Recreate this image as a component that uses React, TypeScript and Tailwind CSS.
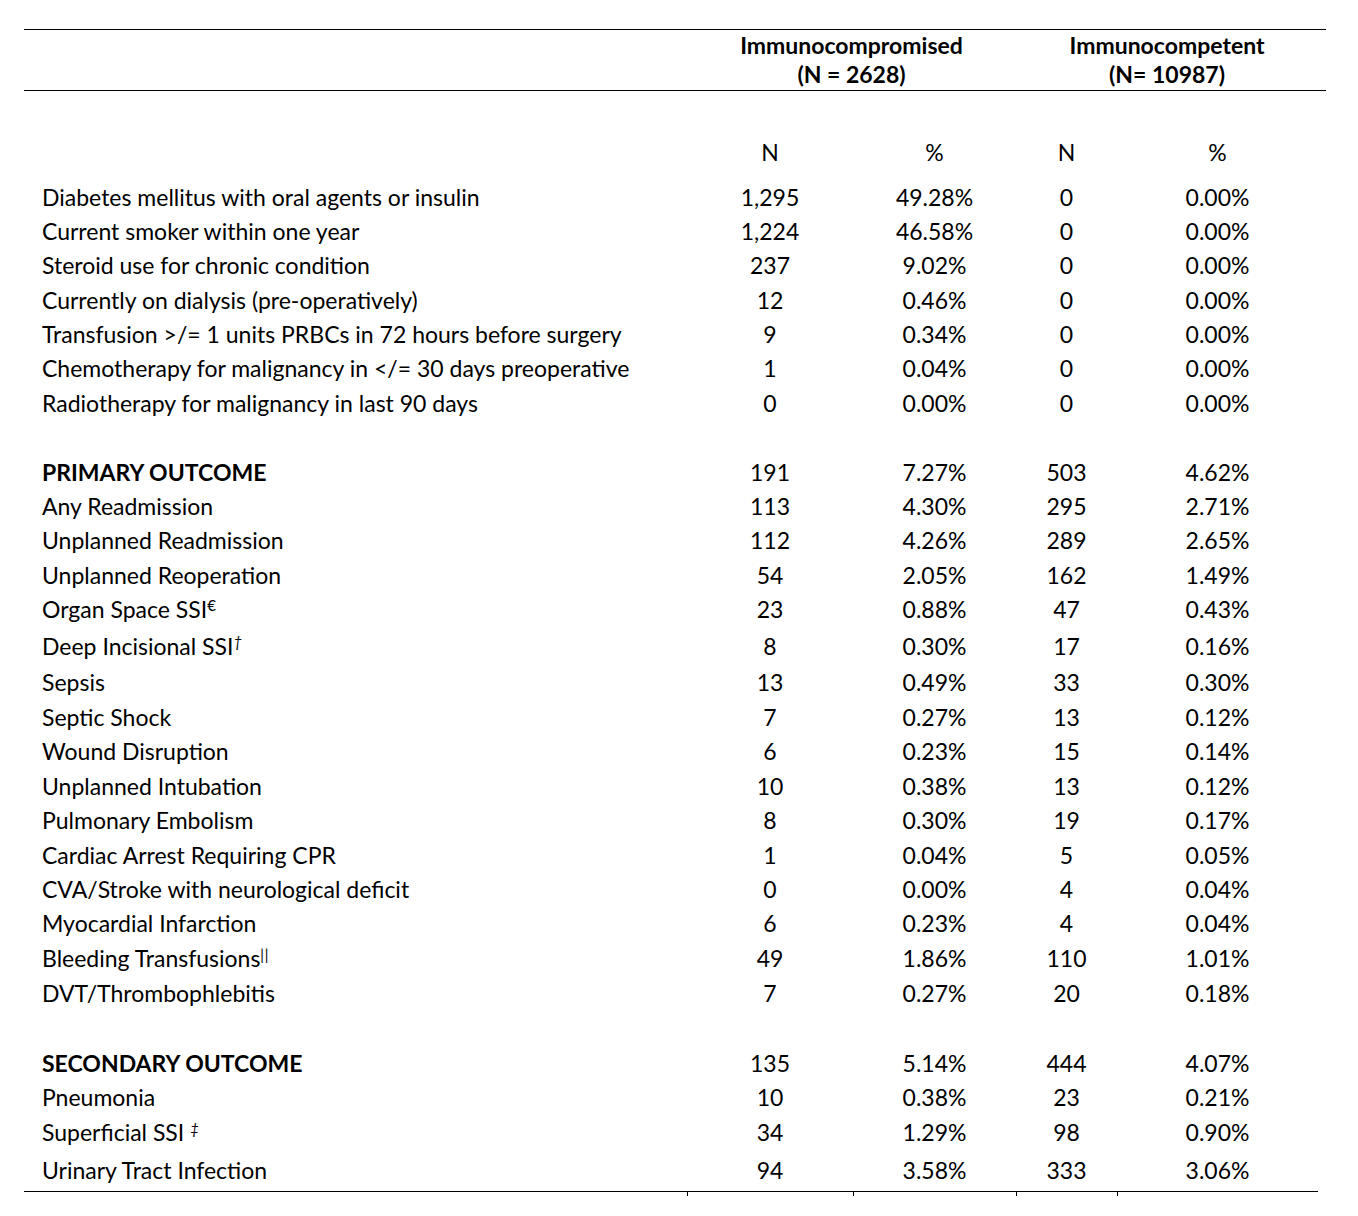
import React from 'react'

type Row = {
  label: string
  sup?: string
  supItalic?: boolean
  bold?: boolean
  h: string
  v?: [string, string, string, string]
}

const ROWS: Row[] = [
  { label: 'Diabetes mellitus with oral agents or insulin', h: 'h-[34px]', v: ['1,295', '49.28%', '0', '0.00%'] },
  { label: 'Current smoker within one year', h: 'h-[34.5px]', v: ['1,224', '46.58%', '0', '0.00%'] },
  { label: 'Steroid use for chronic condition', h: 'h-[34.5px]', v: ['237', '9.02%', '0', '0.00%'] },
  { label: 'Currently on dialysis (pre-operatively)', h: 'h-[34px]', v: ['12', '0.46%', '0', '0.00%'] },
  { label: 'Transfusion >/= 1 units PRBCs in 72 hours before surgery', h: 'h-[34.5px]', v: ['9', '0.34%', '0', '0.00%'] },
  { label: 'Chemotherapy for malignancy in </= 30 days preoperative', h: 'h-[34.5px]', v: ['1', '0.04%', '0', '0.00%'] },
  { label: 'Radiotherapy for malignancy in last 90 days', h: 'h-[34.5px]', v: ['0', '0.00%', '0', '0.00%'] },
  { label: '', h: 'h-[34.5px]' },
  { label: 'PRIMARY OUTCOME', bold: true, h: 'h-[34px]', v: ['191', '7.27%', '503', '4.62%'] },
  { label: 'Any Readmission', h: 'h-[34.5px]', v: ['113', '4.30%', '295', '2.71%'] },
  { label: 'Unplanned Readmission', h: 'h-[34.5px]', v: ['112', '4.26%', '289', '2.65%'] },
  { label: 'Unplanned Reoperation', h: 'h-[34px]', v: ['54', '2.05%', '162', '1.49%'] },
  { label: 'Organ Space SSI', sup: '€', h: 'h-[35.5px]', v: ['23', '0.88%', '47', '0.43%'] },
  { label: 'Deep Incisional SSI', sup: '†', supItalic: true, h: 'h-[37px]', v: ['8', '0.30%', '17', '0.16%'] },
  { label: 'Sepsis', h: 'h-[35.5px]', v: ['13', '0.49%', '33', '0.30%'] },
  { label: 'Septic Shock', h: 'h-[34.5px]', v: ['7', '0.27%', '13', '0.12%'] },
  { label: 'Wound Disruption', h: 'h-[34.5px]', v: ['6', '0.23%', '15', '0.14%'] },
  { label: 'Unplanned Intubation', h: 'h-[34.5px]', v: ['10', '0.38%', '13', '0.12%'] },
  { label: 'Pulmonary Embolism', h: 'h-[34.5px]', v: ['8', '0.30%', '19', '0.17%'] },
  { label: 'Cardiac Arrest Requiring CPR', h: 'h-[34px]', v: ['1', '0.04%', '5', '0.05%'] },
  { label: 'CVA/Stroke with neurological deficit', h: 'h-[34.5px]', v: ['0', '0.00%', '4', '0.04%'] },
  { label: 'Myocardial Infarction', h: 'h-[34.5px]', v: ['6', '0.23%', '4', '0.04%'] },
  { label: 'Bleeding Transfusions', sup: 'ǁ', h: 'h-[35px]', v: ['49', '1.86%', '110', '1.01%'] },
  { label: 'DVT/Thrombophlebitis', h: 'h-[35px]', v: ['7', '0.27%', '20', '0.18%'] },
  { label: '', h: 'h-[35px]' },
  { label: 'SECONDARY OUTCOME', bold: true, h: 'h-[34px]', v: ['135', '5.14%', '444', '4.07%'] },
  { label: 'Pneumonia', h: 'h-[34px]', v: ['10', '0.38%', '23', '0.21%'] },
  { label: 'Superficial SSI ', sup: '‡', supItalic: true, h: 'h-[37px]', v: ['34', '1.29%', '98', '0.90%'] },
  { label: 'Urinary Tract Infection', h: 'h-[40px]', v: ['94', '3.58%', '333', '3.06%'] },
]

export default function App() {
  return (
    <div className="min-h-[1216px] bg-white pt-[29px] pl-[24px] text-black font-['Lato','Liberation_Sans',sans-serif] text-[23px]">
      <table className="table-fixed border-collapse w-[1302px]">
        <colgroup>
          <col className="w-[663px]" />
          <col className="w-[166px]" />
          <col className="w-[163px]" />
          <col className="w-[101px]" />
          <col className="w-[201px]" />
          <col className="w-[8px]" />
        </colgroup>
        <thead>
          <tr className="border-y border-black">
            <th className="h-[61px]" />
            <th colSpan={2} className="h-[61px] pt-[1px] align-top text-center font-bold leading-[29px]">
              Immunocompromised
              <br />
              (N = 2628)
            </th>
            <th colSpan={2} className="h-[61px] pt-[1px] align-top text-center font-bold leading-[29px]">
              Immunocompetent
              <br />
              (N= 10987)
            </th>
            <th />
          </tr>
        </thead>
        <tbody>
          <tr>
            <td colSpan={6} className="h-[45px]" />
          </tr>
          <tr className="h-[45px] align-top leading-[32px] text-center">
            <td />
            <td>N</td>
            <td>%</td>
            <td>N</td>
            <td>%</td>
            <td />
          </tr>
          {ROWS.map((r, i) => (
            <tr key={i} className={`${r.h} leading-[28px]`}>
              <td className={`pl-[18px] pb-[2px] align-middle whitespace-nowrap ${r.bold ? 'font-bold' : ''}`}>
                {r.label}
                {r.sup && <sup className={`text-[15px] ${r.supItalic ? 'italic' : ''}`}>{r.sup}</sup>}
              </td>
              {r.v
                ? r.v.map((c, j) => (
                    <td key={j} className="pb-[2px] text-center align-middle">
                      {c}
                    </td>
                  ))
                : [0, 1, 2, 3].map((j) => <td key={j} />)}
              <td />
            </tr>
          ))}
          <tr className="border-t border-black h-[4px]">
            <td />
            <td className="border-l border-black" />
            <td className="border-l border-black" />
            <td className="border-l border-black" />
            <td className="border-l border-black" />
            <td className="border-t border-white" />
          </tr>
        </tbody>
      </table>
    </div>
  )
}
